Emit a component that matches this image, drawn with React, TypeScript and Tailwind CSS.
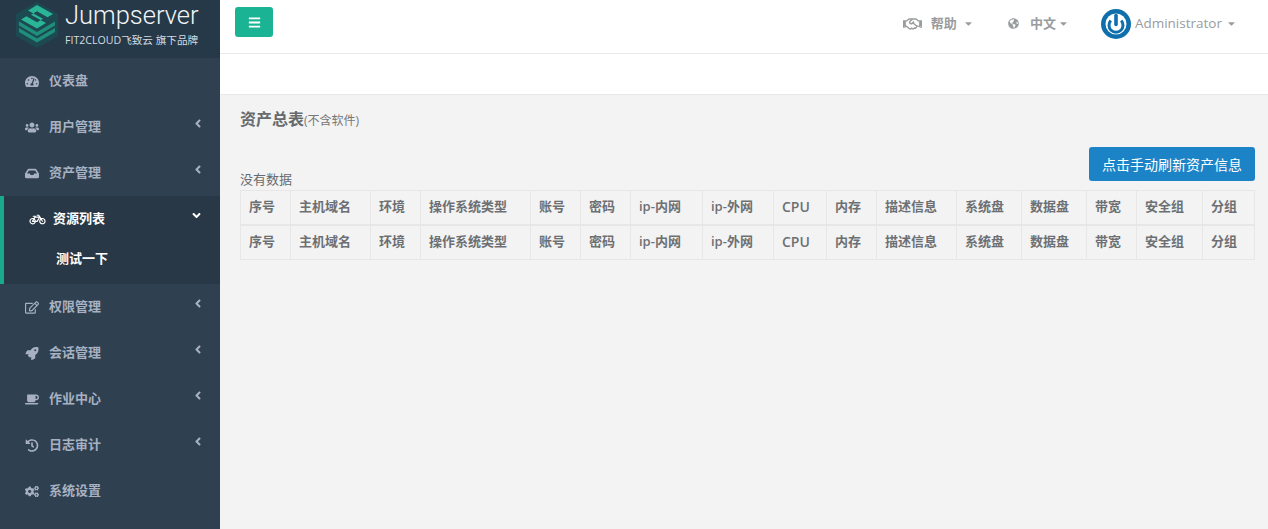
import React from "react";
import {
  FaTachometerAlt, FaUsers, FaInbox, FaBicycle, FaRegEdit, FaRocket, FaCoffee, FaHistory, FaCogs,
  FaBars, FaRegHandshake, FaGlobeAmericas, FaAngleLeft, FaAngleDown, FaCaretDown,
} from "react-icons/fa";

const FONT = "font-['Open_Sans','Noto_Sans_CJK_SC',sans-serif]";

type Item = { label: string; Icon: React.ComponentType<{ className?: string }>; arrow?: boolean };

function NavItem({ label, Icon, arrow }: Item) {
  return (
    <div className="flex h-[46px] items-center pl-[25px] pr-[18px] text-[13px] font-semibold text-[#a7b1c2]">
      <span className="flex w-[24px] shrink-0 items-center">
        <Icon className="h-[13px] w-[14px]" />
      </span>
      <span className="flex-1">{label}</span>
      {arrow && <FaAngleLeft className="mb-[7px] h-[13px] w-[8px]" />}
    </div>
  );
}

const columns: [string, number][] = [
  ["序号", 50], ["主机域名", 80], ["环境", 50], ["操作系统类型", 110], ["账号", 50], ["密码", 50],
  ["ip-内网", 72], ["ip-外网", 71], ["CPU", 53], ["内存", 50], ["描述信息", 80], ["系统盘", 65],
  ["数据盘", 65], ["带宽", 50], ["安全组", 66], ["分组", 52],
];

function Logo() {
  return (
    <svg viewBox="0 0 42 46" className="h-[46px] w-[42px]">
      <path d="M21 0 42 12V34L21 46 0 34V12Z" fill="#1d4a52" />
      <path d="M3 26 21 36.5 39 26v4L21 40.5 3 30Z" fill="#1f8f7c" />
      <path d="M3 19.5 21 30l18-10.5v4L21 34 3 23.5Z" fill="#1f8f7c" />
      <path d="M21 3 37 12 31.5 15.2 21 9.2 15 12.8 30 21 21 26.5 5 17.5 10.5 14.3 21 20.3 27 16.8 12 8.5Z" fill="#2bb597" />
    </svg>
  );
}

function Row({ bottom }: { bottom?: boolean }) {
  return (
    <tr>
      {columns.map(([name, w]) => (
        <th
          key={name}
          style={{ width: w }}
          className={`border border-[#e7e7e7] pb-[2px] pl-[8px] text-left align-middle font-semibold text-[#6d7073] ${name === "CPU" ? "text-[14px]" : "text-[13px]"} ${bottom ? "h-[35px]" : "h-[34px] border-b-2"}`}
        >
          {name}
        </th>
      ))}
    </tr>
  );
}

export default function App() {
  return (
    <div className={`flex h-[529px] w-full overflow-hidden bg-[#f3f3f4] ${FONT}`}>
      <aside className="flex w-[220px] shrink-0 flex-col bg-[#2f4050]">
        <div className="flex h-[58px] shrink-0 items-start bg-[#263949] pl-[16px]">
          <div className="mt-[2px]"><Logo /></div>
          <div className="ml-[7px] flex flex-col">
            <span className="font-['Roboto',sans-serif] text-[25.5px] font-light leading-[31px] text-[#f2f5f6]">Jumpserver</span>
            <span className="mt-[2px] text-[10.6px] leading-[14px] text-[#d5dce0]">FIT2CLOUD飞致云 旗下品牌</span>
          </div>
        </div>
        <NavItem label="仪表盘" Icon={FaTachometerAlt} />
        <NavItem label="用户管理" Icon={FaUsers} arrow />
        <NavItem label="资产管理" Icon={FaInbox} arrow />
        <div className="h-[88px] shrink-0 border-l-4 border-[#19aa8d] bg-[#293846]">
          <div className="flex h-[46px] items-center pl-[25px] pr-[18px] text-[13px] font-semibold text-white">
            <FaBicycle className="mr-[7px] h-[13px] w-[17px]" />
            <span className="flex-1">资源列表</span>
            <FaAngleDown className="mb-[7px] h-[13px] w-[11px]" />
          </div>
          <div className="pl-[52px] text-[13px] font-bold leading-[32px] text-white">测试一下</div>
        </div>
        <NavItem label="权限管理" Icon={FaRegEdit} arrow />
        <NavItem label="会话管理" Icon={FaRocket} arrow />
        <NavItem label="作业中心" Icon={FaCoffee} arrow />
        <NavItem label="日志审计" Icon={FaHistory} arrow />
        <NavItem label="系统设置" Icon={FaCogs} />
      </aside>

      <main className="flex min-w-0 flex-1 flex-col">
        <header className="flex h-[95px] shrink-0 flex-col border-b border-[#e7eaec] bg-white">
          <div className="flex h-[54px] items-start border-b border-[#e7eaec]">
            <button className="ml-[15px] mt-[7px] flex h-[30px] w-[38px] items-center justify-center rounded-[3px] bg-[#1ab394] text-white">
              <FaBars className="h-[13px] w-[13px]" />
            </button>
            <div className="ml-auto flex h-[47px] items-center text-[13px] text-[#999c9e]">
              <FaRegHandshake className="h-[16px] w-[19px]" />
              <span className="ml-[9px] font-semibold">帮助</span>
              <FaCaretDown className="ml-[7px] h-[11px] w-[9px]" />
              <FaGlobeAmericas className="ml-[35px] h-[11px] w-[11px]" />
              <span className="ml-[11px] font-semibold">中文</span>
              <FaCaretDown className="ml-[3px] h-[11px] w-[9px]" />
              <div className="ml-[33px] mr-[4px] flex h-[30px] w-[30px] items-center justify-center">
                <svg viewBox="0 0 30 30" className="h-[30px] w-[30px]">
                  <circle cx="15" cy="15" r="15" fill="#0f6fad" />
                  <circle cx="15" cy="15" r="10.5" fill="#ffffff" />
                  <path d="M9.8 11.5a7 7 0 1 0 10.4 0" fill="none" stroke="#0f6fad" strokeWidth="3" />
                  <path d="M15 6.5v9" stroke="#0f6fad" strokeWidth="3.6" strokeLinecap="round" />
                </svg>
              </div>
              <span className="text-[13.5px]">Administrator</span>
              <FaCaretDown className="ml-[5px] mr-[32px] h-[11px] w-[9px]" />
            </div>
          </div>
        </header>

        <section className="flex flex-1 flex-col pl-[20px] pr-[13px] text-[#676a6c]">
          <div className="mt-[13px] flex h-[22px] items-baseline">
            <h2 className="text-[16px] font-semibold leading-[22px] text-[#676a6c]">资产总表</h2>
            <span className="text-[12px] text-[#777]">(不含软件)</span>
          </div>
          <div className="mt-[16px] flex h-[44px] items-end justify-between">
            <span className="mb-[3px] text-[13px] leading-[16px]">没有数据</span>
            <button className="mb-[9px] h-[34px] w-[166px] rounded-[3px] bg-[#1c84c6] text-[14px] font-normal text-white">
              点击手动刷新资产信息
            </button>
          </div>
          <table className="w-[1014px] table-fixed border-collapse">
            <thead><Row /></thead>
            <tbody><Row bottom /></tbody>
          </table>
        </section>
      </main>
    </div>
  );
}
